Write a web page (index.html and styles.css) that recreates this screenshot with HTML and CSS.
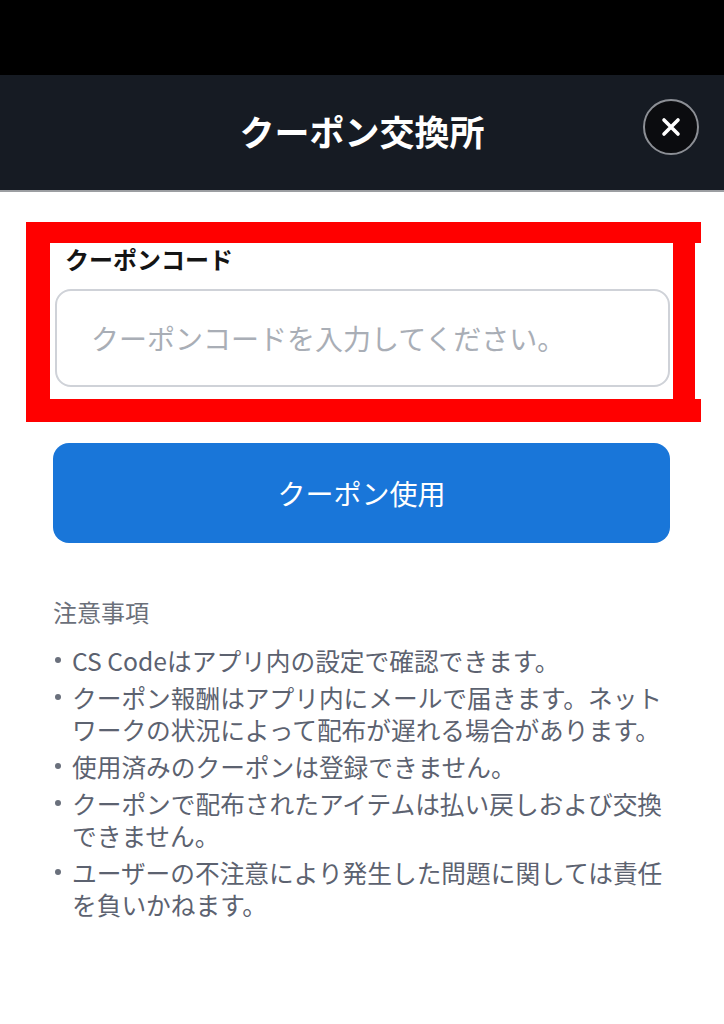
FILE: index.html
```html
<!DOCTYPE html>
<html lang="ja">
<head>
<meta charset="utf-8">
<title>クーポン交換所</title>
<link rel="stylesheet" href="styles.css">
</head>
<body>
<div class="statusbar"></div>
<header class="header">
  <h1 class="title">クーポン交換所</h1>
  <button class="close" aria-label="閉じる">
    <svg width="20" height="20" viewBox="0 0 20 20"><path d="M3 3 L17 17 M17 3 L3 17" stroke="#fff" stroke-width="3.6" stroke-linecap="round"/></svg>
  </button>
</header>
<main class="content">
  <div class="field">
    <label class="label" for="code">クーポンコード</label>
    <input class="input" id="code" type="text" placeholder="クーポンコードを入力してください。">
    <div class="mark" aria-hidden="true">
      <div class="bar bar-top"></div>
      <div class="bar bar-bottom"></div>
      <div class="bar bar-left"></div>
      <div class="bar bar-right"></div>
    </div>
  </div>
  <button class="submit">クーポン使用</button>
  <section class="notes">
    <h2 class="notes-title">注意事項</h2>
    <ul class="notes-list">
      <li class="item"><span class="dot"></span><span class="text">CS Codeはアプリ内の設定で確認できます。</span></li>
      <li class="item"><span class="dot"></span><span class="text">クーポン報酬はアプリ内にメールで届きます。ネットワークの状況によって配布が遅れる場合があります。</span></li>
      <li class="item"><span class="dot"></span><span class="text">使用済みのクーポンは登録できません。</span></li>
      <li class="item"><span class="dot"></span><span class="text">クーポンで配布されたアイテムは払い戻しおよび交換できません。</span></li>
      <li class="item"><span class="dot"></span><span class="text">ユーザーの不注意により発生した問題に関しては責任を負いかねます。</span></li>
    </ul>
  </section>
</main>
</body>
</html>
```

FILE: styles.css
```css
* { box-sizing: border-box; }
html, body { margin: 0; padding: 0; }
body {
  width: 724px;
  min-height: 1024px;
  background: #ffffff;
  font-family: "Noto Sans CJK JP", "Noto Sans", sans-serif;
}
.statusbar {
  height: 75px;
  background: #000000;
}
.header {
  position: relative;
  height: 117px;
  background: #161b23;
  border-bottom: 2px solid #9c9ea2;
  display: flex;
  align-items: center;
  justify-content: center;
  padding-bottom: 4px;
}
.title {
  margin: 0;
  color: #ffffff;
  font-size: 35px;
  font-weight: 700;
  line-height: 40px;
}
.close {
  position: absolute;
  right: 25px;
  top: 24px;
  width: 56px;
  height: 56px;
  border-radius: 50%;
  border: 2px solid #8c8f95;
  background: #0b0c0f;
  padding: 0;
  display: flex;
  align-items: center;
  justify-content: center;
}
.content {
  padding: 53px 54px 0 53px;
}
.field {
  position: relative;
  display: flex;
  flex-direction: column;
}
.label {
  font-size: 24px;
  font-weight: 700;
  line-height: 28px;
  color: #141414;
  padding-left: 12px;
}
.input {
  margin-top: 16px;
  margin-left: 2px;
  width: 615px;
  height: 98px;
  border: 2px solid #cfd2d8;
  border-radius: 16px;
  background: #ffffff;
  padding: 0 0 0 34px;
  font-family: "Noto Sans CJK JP", "Noto Sans", sans-serif;
  font-size: 28px;
  color: #333;
  outline: none;
}
.input::placeholder {
  color: #a9aeb6;
}
.mark {
  position: absolute;
  top: -23px;
  left: -27px;
  right: -31px;
  bottom: -35px;
  pointer-events: none;
}
.bar {
  position: absolute;
  background: #ff0000;
}
.bar-top { top: 0; left: 0; right: 0; height: 21px; }
.bar-bottom { bottom: 0; left: 0; right: 0; height: 23px; }
.bar-left { top: 0; bottom: 0; left: 0; width: 24px; }
.bar-right { top: 0; bottom: 0; right: 6px; width: 22px; }
.submit {
  display: flex;
  align-items: center;
  justify-content: center;
  margin-top: 56px;
  width: 617px;
  height: 100px;
  border: none;
  border-radius: 16px;
  background: #1976d9;
  color: #ffffff;
  font-family: "Noto Sans CJK JP", "Noto Sans", sans-serif;
  font-size: 28px;
  font-weight: 400;
  padding: 0;
}
.notes {
  margin-top: 53px;
}
.notes-title {
  margin: 0;
  font-size: 24px;
  font-weight: 400;
  line-height: 32px;
  color: #6b707a;
}
.notes-list {
  list-style: none;
  margin: 16px 0 0 0;
  padding: 0;
}
.item {
  display: flex;
  align-items: flex-start;
  font-size: 24.7px;
  line-height: 32px;
  color: #5c6270;
}
.item + .item { margin-top: 5px; }
.dot {
  flex: none;
  width: 19px;
  height: 32px;
  display: flex;
  align-items: center;
  padding-left: 2px;
}
.dot::before {
  content: "";
  width: 6px;
  height: 6px;
  border-radius: 50%;
  background: #6a707c;
}
.text {
  flex: 1;
}
```
